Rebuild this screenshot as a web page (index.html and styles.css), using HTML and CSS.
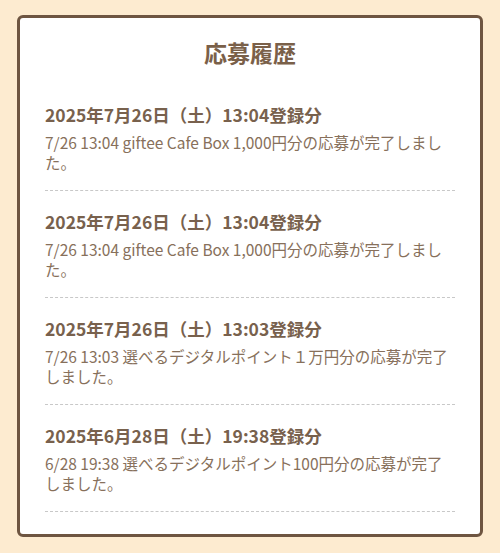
FILE: index.html
```html
<!DOCTYPE html>
<html lang="ja">
<head>
<meta charset="utf-8">
<link rel="stylesheet" href="styles.css">
</head>
<body>
<div class="card">
  <h1 class="title">応募履歴</h1>
  <ul class="list">
    <li class="item">
      <div class="head">2025年7月26日（土）13:04登録分</div>
      <p class="body">7/26 13:04 giftee Cafe Box 1,000円分の応募が完了しました。</p>
    </li>
    <li class="item">
      <div class="head">2025年7月26日（土）13:04登録分</div>
      <p class="body">7/26 13:04 giftee Cafe Box 1,000円分の応募が完了しました。</p>
    </li>
    <li class="item">
      <div class="head">2025年7月26日（土）13:03登録分</div>
      <p class="body">7/26 13:03 選べるデジタルポイント１万円分の応募が完了しました。</p>
    </li>
    <li class="item">
      <div class="head">2025年6月28日（土）19:38登録分</div>
      <p class="body">6/28 19:38 選べるデジタルポイント100円分の応募が完了しました。</p>
    </li>
    <li class="item">
      <div class="head">2025年6月28日（土）19:36登録分</div>
      <p class="body">6/28 19:36 選べるデジタルポイント100円分の応募が完了しました。</p>
    </li>
  </ul>
</div>
</body>
</html>
```
FILE: styles.css
```css
html, body {
  margin: 0;
  padding: 0;
}
body {
  background: #fdebd0;
  font-family: "Noto Sans CJK JP", "Noto Sans", sans-serif;
  padding: 15px 17px 16px;
  box-sizing: border-box;
  height: 553px;
  overflow: hidden;
}
.card {
  box-sizing: border-box;
  height: 522px;
  background: #fff;
  border: 3px solid #6e5541;
  border-radius: 6px;
  padding: 18px 25px 0;
  overflow: hidden;
}
.title {
  margin: 0 0 16px;
  text-align: center;
  font-size: 23px;
  line-height: 32px;
  font-weight: 700;
  color: #7a6049;
}
.list {
  list-style: none;
  margin: 0;
  padding: 0;
}
.item {
  padding: 18px 0;
  border-bottom: 1px dashed #c8c8c8;
}
.head {
  font-size: 17.5px;
  line-height: 26px;
  font-weight: 700;
  color: #78614d;
}
.body {
  margin: 4px 0 0;
  font-size: 15.5px;
  line-height: 20px;
  color: #87705b;
}
```
